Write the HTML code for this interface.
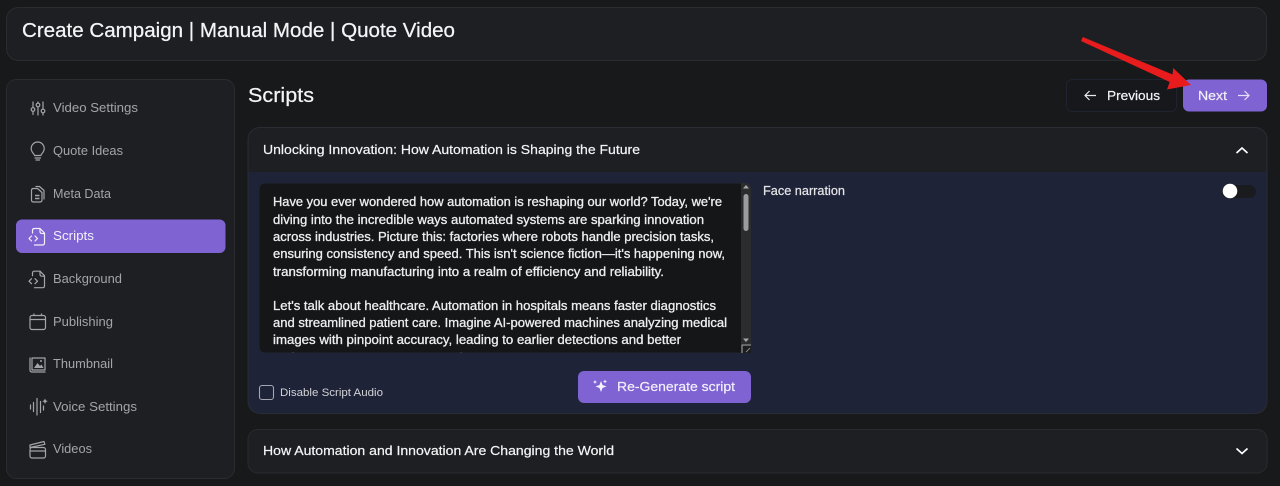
<!DOCTYPE html>
<html lang="en">
<head>
<meta charset="utf-8">
<title>Create Campaign</title>
<style>
html,body{margin:0;padding:0;background:#18191b;width:1280px;height:486px;overflow:hidden}
svg{display:block}
text{font-family:"Liberation Sans",sans-serif;white-space:pre}
.nav{font-size:13px;fill:#a5a5a8}
.ta{font-size:12.5px;fill:#eeeef0;stroke:#eeeef0;stroke-width:.3}
.ic{fill:none;stroke:#a5a5a8;stroke-width:1.2;stroke-linecap:round;stroke-linejoin:round}
.w{fill:#f5f5f7}
</style>
</head>
<body>
<svg width="1280" height="486" viewBox="0 0 1280 486" xmlns="http://www.w3.org/2000/svg">
<defs><clipPath id="tc"><rect x="259" y="183" width="482" height="169.500"/></clipPath></defs>
<rect width="1280" height="486" fill="#18191b"/>

<!-- header -->
<rect x="6.500" y="7.500" width="1260" height="53" rx="12" fill="#1e1f23" stroke="#2b2c30"/>
<text x="22" y="37" font-size="20" class="w" stroke="#f5f5f7" stroke-width=".25" textLength="433" lengthAdjust="spacingAndGlyphs">Create Campaign | Manual Mode | Quote Video</text>

<!-- sidebar -->
<rect x="6.500" y="79.500" width="228" height="399" rx="10" fill="#1e1f23" stroke="#2b2c30"/>
<rect x="16" y="219.500" width="209.500" height="33.500" rx="6" fill="#7f63d3"/>
<text x="53" y="112" class="nav" textLength="85" lengthAdjust="spacingAndGlyphs">Video Settings</text>
<text x="53" y="155" class="nav" textLength="70" lengthAdjust="spacingAndGlyphs">Quote Ideas</text>
<text x="53" y="198" class="nav" textLength="58" lengthAdjust="spacingAndGlyphs">Meta Data</text>
<text x="53" y="240" class="nav" style="fill:#f3f0fb" textLength="41" lengthAdjust="spacingAndGlyphs">Scripts</text>
<text x="53" y="283" class="nav" textLength="69" lengthAdjust="spacingAndGlyphs">Background</text>
<text x="53" y="326" class="nav" textLength="60" lengthAdjust="spacingAndGlyphs">Publishing</text>
<text x="53" y="368" class="nav" textLength="60" lengthAdjust="spacingAndGlyphs">Thumbnail</text>
<text x="53" y="411" class="nav" textLength="84" lengthAdjust="spacingAndGlyphs">Voice Settings</text>
<text x="53" y="453" class="nav" textLength="39" lengthAdjust="spacingAndGlyphs">Videos</text>

<!-- sliders -->
<path class="ic" d="M33 102v5.500M33 111.500v3M38 102v1M38 107v8M43 102v7M43 113v2"/>
<circle class="ic" cx="33" cy="109.500" r="1.800"/><circle class="ic" cx="38" cy="105" r="1.800"/><circle class="ic" cx="43" cy="111" r="1.800"/>
<!-- bulb -->
<path class="ic" d="M34.500 155.500c0-1.500-3.300-3-3.300-7a6.500 6.500 0 0 1 13 0c0 4-3.300 5.500-3.300 7zM35 158h5.500M36 160h3.500"/>
<!-- meta docs -->
<path class="ic" d="M33.500 188.500h4l4.500 4v7.500c0 1.300-.7 2-2 2h-6.500c-1.400 0-2-.7-2-2v-9.500c0-1.300.6-2 2-2z"/>
<path class="ic" d="M36 186.500h3.500l4.500 4v8.500"/>
<path d="M35 195.500h4.500M35 198.500h4.500" stroke="#a5a5a8" stroke-width="1.500"/>
<!-- scripts file -->
<g fill="none" stroke="#f3f0fb" stroke-width="1.200" stroke-linejoin="round" stroke-linecap="round">
<path d="M32.500 233v-2.500c0-1.300.7-2 2-2h5.500l4.500 4.500v10c0 1.400-.7 2-2 2h-8"/>
<path d="M40 228.500v3c0 1.100.6 2 2 2h2.500M31.500 236l-2.500 2.500 2.500 2.500M35 236l2.500 2.500-2.500 2.500"/>
</g>
<!-- background file -->
<g class="ic" transform="translate(0 42.700)">
<path d="M32.500 233v-2.500c0-1.300.7-2 2-2h5.500l4.500 4.500v10c0 1.400-.7 2-2 2h-8"/>
<path d="M40 228.500v3c0 1.100.6 2 2 2h2.500M31.500 236l-2.500 2.500 2.500 2.500M35 236l2.500 2.500-2.500 2.500"/>
</g>
<!-- calendar -->
<rect class="ic" x="30" y="315.500" width="15.500" height="14" rx="2"/>
<path class="ic" d="M30 319.500h15.500M34 314v1.500M41.500 314v1.500"/>
<!-- thumbnail -->
<path class="ic" d="M32 358h13v12H32z"/>
<path class="ic" d="M30 358v12c0 1.500.7 2 2 2h13"/>
<path d="M34 368l3.500-5 2.500 3 1.500-1.500 2 3.500z" fill="#a5a5a8"/>
<circle cx="41" cy="361" r="1" fill="#a5a5a8"/>
<!-- voice -->
<path class="ic" d="M30.500 405v4M33.500 402.500v9M37 398.500v16.500M40.500 401.500v11M43.500 406v4"/>
<path d="M45 398.500l.9 1.900 1.900.8-1.900.8-.9 2-.9-2-1.900-.8 1.900-.8z" fill="#a5a5a8"/>
<!-- clapper -->
<rect class="ic" x="30" y="447.500" width="15.500" height="10.500" rx="2"/>
<path class="ic" d="M30 447.500v-2.500l14-3.500.9 2.800L30 447.500zM30 451h15.500"/>

<!-- title row -->
<text x="248" y="102" font-size="20" class="w" stroke="#f5f5f7" stroke-width=".2" textLength="66" lengthAdjust="spacingAndGlyphs">Scripts</text>
<rect x="1066.500" y="79.500" width="110" height="32" rx="6" fill="#16181b" stroke="#1f2430"/>
<path d="M1096 95.500h-11M1089.500 91l-4.500 4.500 4.500 4.500" fill="none" stroke="#e8e8ea" stroke-width="1.200"/>
<text x="1107" y="100" font-size="13" class="w" stroke="#f5f5f7" stroke-width=".2" textLength="53" lengthAdjust="spacingAndGlyphs">Previous</text>
<rect x="1183" y="79.500" width="84" height="32" rx="6" fill="#7f63d3"/>
<text x="1198" y="100" font-size="13" fill="#f3f0fb" stroke="#f3f0fb" stroke-width=".2" textLength="29" lengthAdjust="spacingAndGlyphs">Next</text>
<path d="M1238 95.500h11M1244.500 91l4.500 4.500-4.500 4.500" fill="none" stroke="#e6e0f7" stroke-width="1.200"/>

<!-- accordion 1 -->
<path d="M260 127.500h995a12 12 0 0 1 12 12v262a12 12 0 0 1-12 12H260a12 12 0 0 1-12-12v-262a12 12 0 0 1 12-12z" fill="#1e2338" stroke="#2a2c33"/>
<path d="M260.500 128h994a12 12 0 0 1 12 12v32h-1018v-32a12 12 0 0 1 12-12z" fill="#1e1f23"/>
<text x="263" y="154" font-size="13" class="w" stroke="#f5f5f7" stroke-width=".2" textLength="377" lengthAdjust="spacingAndGlyphs">Unlocking Innovation: How Automation is Shaping the Future</text>
<path d="M1236.500 153l5.500-5 5.500 5" fill="none" stroke="#fff" stroke-width="1.700"/>

<!-- textarea -->
<rect x="259" y="183" width="492" height="170" rx="6" fill="#151618" stroke="#20242f"/>
<g clip-path="url(#tc)">
<text x="273" y="206" class="ta" textLength="449" lengthAdjust="spacingAndGlyphs">Have you ever wondered how automation is reshaping our world? Today, we're</text>
<text x="273" y="224" class="ta" textLength="431" lengthAdjust="spacingAndGlyphs">diving into the incredible ways automated systems are sparking innovation</text>
<text x="273" y="241" class="ta" textLength="441" lengthAdjust="spacingAndGlyphs">across industries. Picture this: factories where robots handle precision tasks,</text>
<text x="273" y="258" class="ta" textLength="452" lengthAdjust="spacingAndGlyphs">ensuring consistency and speed. This isn't science fiction—it's happening now,</text>
<text x="273" y="276" class="ta" textLength="391" lengthAdjust="spacingAndGlyphs">transforming manufacturing into a realm of efficiency and reliability.</text>
<text x="273" y="310" class="ta" textLength="443" lengthAdjust="spacingAndGlyphs">Let's talk about healthcare. Automation in hospitals means faster diagnostics</text>
<text x="273" y="327" class="ta" textLength="454" lengthAdjust="spacingAndGlyphs">and streamlined patient care. Imagine AI-powered machines analyzing medical</text>
<text x="273" y="344" class="ta" textLength="408" lengthAdjust="spacingAndGlyphs">images with pinpoint accuracy, leading to earlier detections and better</text>
<text x="273" y="362" class="ta" textLength="217" lengthAdjust="spacingAndGlyphs">patient outcomes. Doctors can focus</text>
</g>
<!-- scrollbar -->
<path d="M741 183h4a6 6 0 0 1 6 6v164h-10z" fill="#2b2c2e"/>
<path d="M746 185l3 3.500h-6z" fill="#a8a8a8"/>
<rect x="743.500" y="194" width="5" height="37" rx="2.500" fill="#9c9c9e"/>
<path d="M746 342l3-3.500h-6z" fill="#a8a8a8"/>
<rect x="741" y="344" width="10" height="9" fill="#1c1d1f"/>
<path d="M742 353v-8h9" fill="none" stroke="#b0b0b0" stroke-width="1"/>
<path d="M746 352l4-4" stroke="#888" stroke-width="1"/>

<!-- face narration -->
<text x="763" y="195" font-size="12.500" fill="#e6e6e8" stroke="#e6e6e8" stroke-width=".2" textLength="82" lengthAdjust="spacingAndGlyphs">Face narration</text>
<rect x="1222" y="185" width="34" height="13" rx="6.500" fill="#1a1b1e"/>
<circle cx="1230" cy="191" r="7.300" fill="#fff"/>

<!-- bottom row -->
<rect x="259.500" y="385.500" width="14" height="14" rx="2.500" fill="none" stroke="#a5a7ae" stroke-width="1.100"/>
<text x="280" y="396" font-size="11" fill="#d2d2d5" textLength="103" lengthAdjust="spacingAndGlyphs">Disable Script Audio</text>
<rect x="578" y="371" width="173" height="32" rx="6" fill="#7f63d3"/>
<path d="M601 381l1.500 4 4 1.500-4 1.500-1.500 4-1.500-4-4-1.500 4-1.500z" fill="#f5f2fc"/>
<path d="M595 380l.6 1.400 1.400.6-1.400.6-.6 1.400-.6-1.400-1.400-.6 1.400-.6zM605 379.500l.6 1.400 1.400.6-1.400.6-.6 1.400-.6-1.400-1.400-.6 1.400-.6z" fill="#f5f2fc"/>
<text x="617" y="391" font-size="13" fill="#f3f0fb" stroke="#f3f0fb" stroke-width=".2" textLength="118" lengthAdjust="spacingAndGlyphs">Re-Generate script</text>

<!-- accordion 2 -->
<rect x="248" y="429.500" width="1019" height="43.500" rx="10" fill="#1e1f23" stroke="#2a2b2f"/>
<text x="263" y="455" font-size="13" class="w" stroke="#f5f5f7" stroke-width=".2" textLength="351" lengthAdjust="spacingAndGlyphs">How Automation and Innovation Are Changing the World</text>
<path d="M1236.500 448.500l5.500 5 5.500-5" fill="none" stroke="#fff" stroke-width="1.700"/>

<!-- annotation arrow -->
<path d="M1081 41l1.800-4 89.700 37.500.7-6.500 17.800 17-24 4.500 2.700-7.500z" fill="#e81c1c"/>
</svg>
</body>
</html>
